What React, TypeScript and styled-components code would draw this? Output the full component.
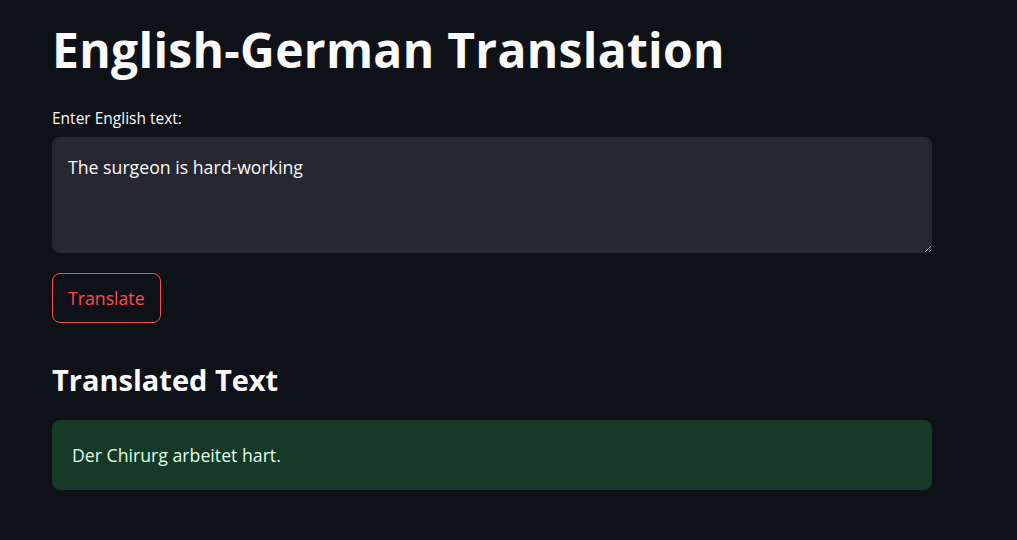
import React, { useState } from "react";
import styled, { createGlobalStyle } from "styled-components";

const GlobalStyle = createGlobalStyle`
  html, body {
    margin: 0;
    padding: 0;
    background-color: #0e1117;
  }
  body {
    font-family: "Open Sans", "Noto Sans", sans-serif;
    color: #fafafa;
  }
`;

const Page = styled.main`
  width: 880px;
  padding: 14px 0 0 52px;
  display: flex;
  flex-direction: column;
`;

const Title = styled.h1`
  margin: 0 0 22px;
  font-size: 48px;
  font-weight: 700;
  line-height: 72px;
  letter-spacing: 0.3px;
  color: #fafafa;
`;

const Label = styled.label`
  font-size: 15.5px;
  line-height: 20px;
  margin-bottom: 9px;
  color: #fafafa;
`;

const TextArea = styled.textarea`
  box-sizing: border-box;
  width: 100%;
  height: 116px;
  padding: 18px 16px;
  border: none;
  border-radius: 8px;
  background-color: #262730;
  color: #fafafa;
  font-family: inherit;
  font-size: 17.7px;
  line-height: 24px;
  resize: vertical;
  outline: none;
`;

const TranslateButton = styled.button`
  align-self: flex-start;
  margin-top: 20px;
  height: 50px;
  padding: 0 15px;
  border: 1px solid #ff4b4b;
  border-radius: 8px;
  background: transparent;
  color: #ff4b4b;
  font-family: inherit;
  font-size: 17.7px;
  cursor: pointer;
`;

const SubTitle = styled.h2`
  margin: 37px 0 20px;
  font-size: 29px;
  font-weight: 700;
  line-height: 40px;
  color: #fafafa;
`;

const SuccessBox = styled.div`
  box-sizing: border-box;
  height: 70px;
  padding: 0 20px;
  display: flex;
  align-items: center;
  border-radius: 8px;
  background-color: #173928;
  color: #dffde9;
  font-size: 17.7px;
`;

const App: React.FC = () => {
  const [text, setText] = useState("The surgeon is hard-working");

  return (
    <>
      <GlobalStyle />
      <Page>
        <Title>English-German Translation</Title>
        <Label htmlFor="source">Enter English text:</Label>
        <TextArea
          id="source"
          value={text}
          onChange={(e) => setText(e.target.value)}
        />
        <TranslateButton>Translate</TranslateButton>
        <SubTitle>Translated Text</SubTitle>
        <SuccessBox>Der Chirurg arbeitet hart.</SuccessBox>
      </Page>
    </>
  );
};

export default App;
